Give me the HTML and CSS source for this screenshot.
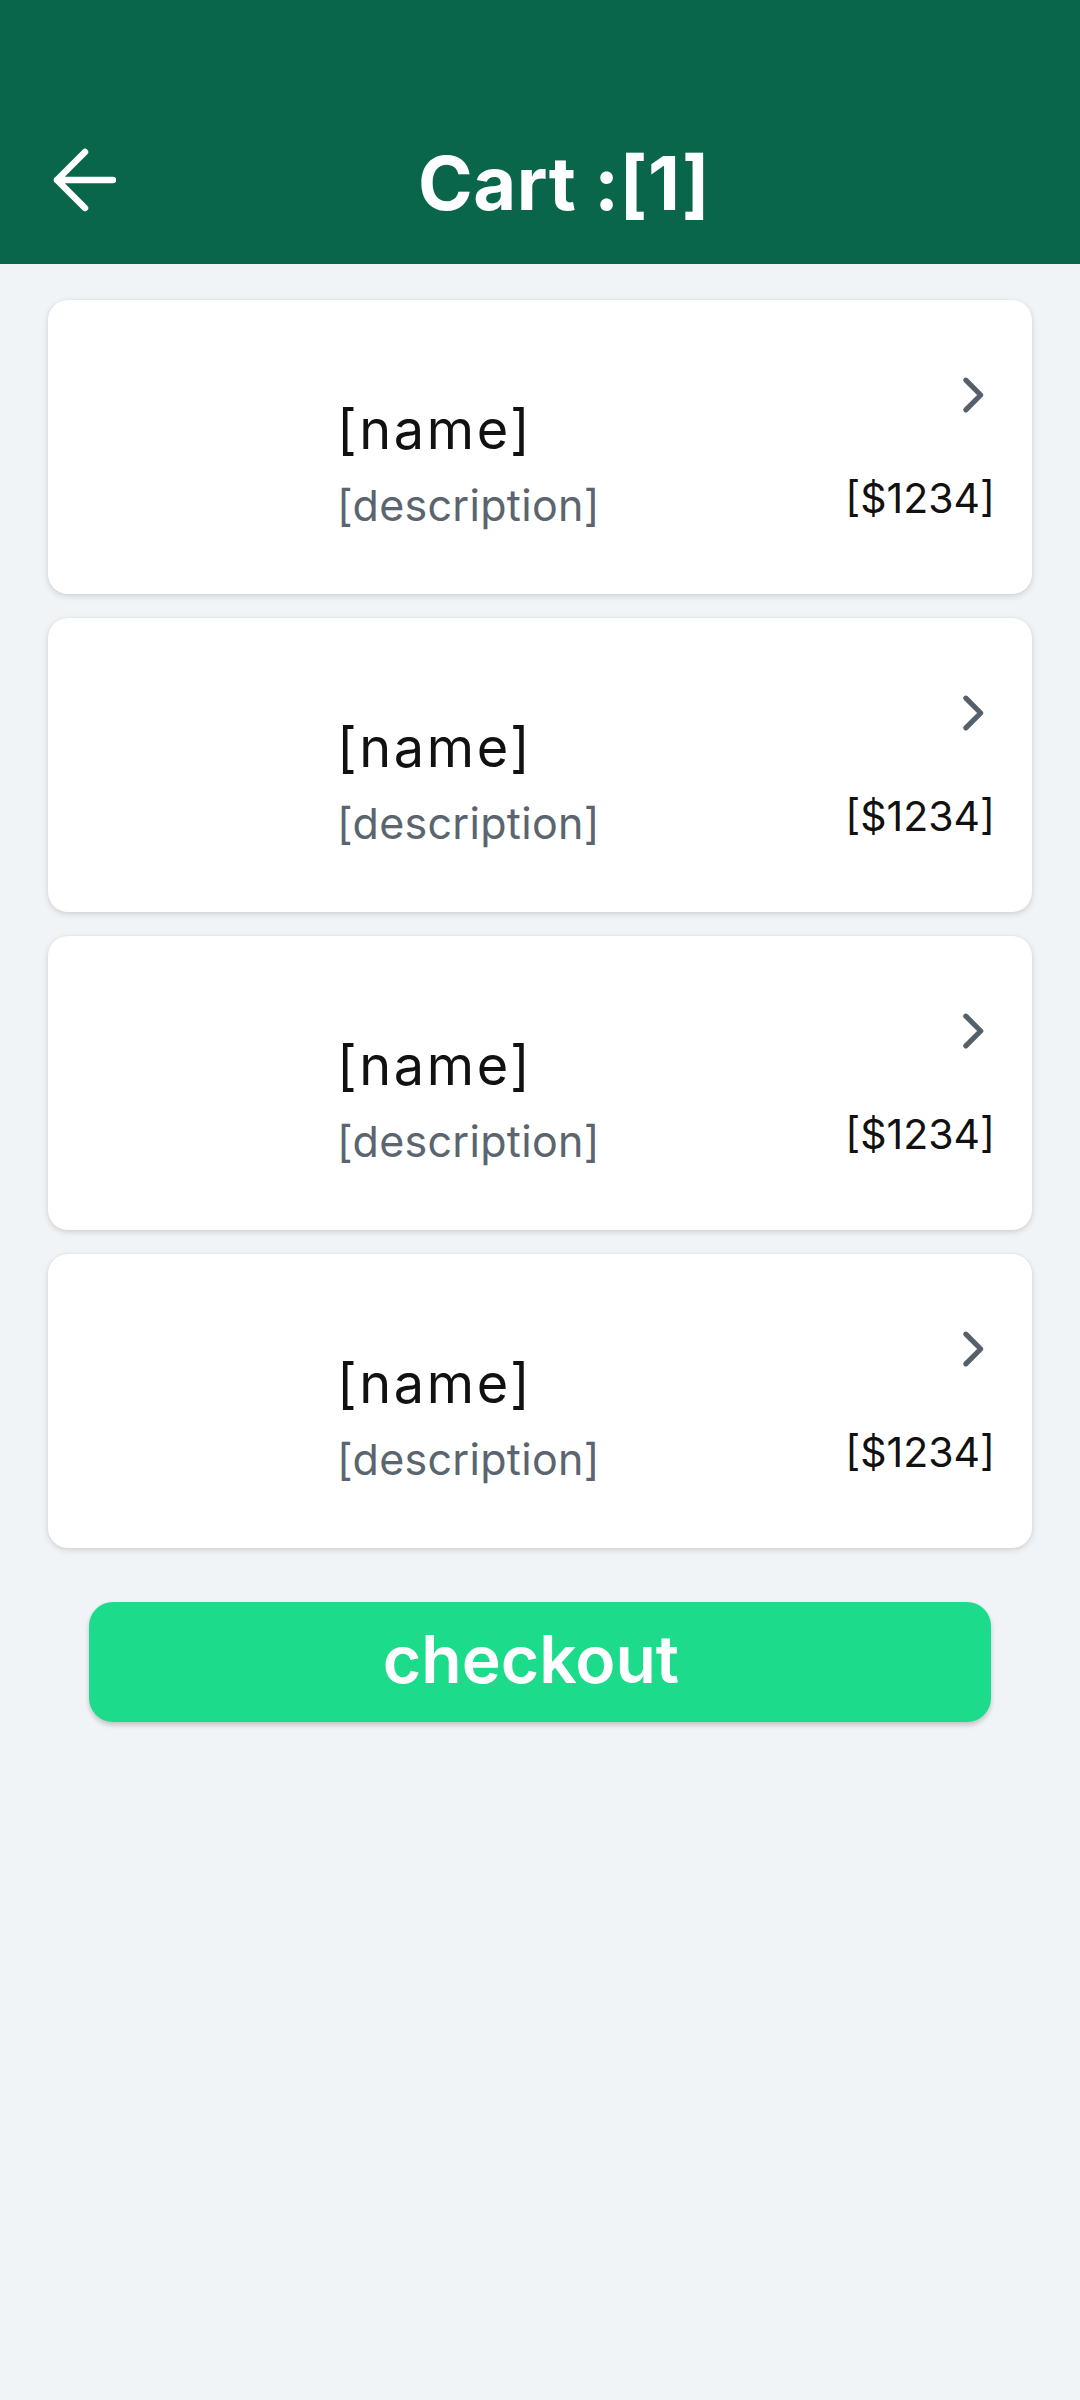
FILE: index.html
```html
<!DOCTYPE html>
<html lang="en">
<head>
<meta charset="utf-8">
<title>Cart</title>
<link rel="stylesheet" href="styles.css">
</head>
<body>
<header class="appbar">
  <div class="toolbar">
    <div class="back">
      <svg width="64" height="64" viewBox="0 0 64 64" fill="none" stroke="#fff" stroke-width="6.5" stroke-linecap="round" stroke-linejoin="round">
        <path d="M5 32H61M5 32L33 4M5 32L33 60"/>
      </svg>
    </div>
    <h1 class="title">Cart :[1]</h1>
    <div class="spacer"></div>
  </div>
</header>
<main class="list">
  <div class="card">
    <div class="thumb"></div>
    <div class="info">
      <div class="name">[name]</div>
      <div class="desc">[description]</div>
    </div>
    <div class="side">
      <svg class="chev" width="66" height="66" viewBox="0 0 24 24" fill="none" stroke="#56606a" stroke-width="1.9" stroke-linecap="round" stroke-linejoin="round"><path d="M9.4 6.6L14.8 12L9.4 17.4"/></svg>
      <div class="price">[$1234]</div>
    </div>
  </div>
  <div class="card">
    <div class="thumb"></div>
    <div class="info">
      <div class="name">[name]</div>
      <div class="desc">[description]</div>
    </div>
    <div class="side">
      <svg class="chev" width="66" height="66" viewBox="0 0 24 24" fill="none" stroke="#56606a" stroke-width="1.9" stroke-linecap="round" stroke-linejoin="round"><path d="M9.4 6.6L14.8 12L9.4 17.4"/></svg>
      <div class="price">[$1234]</div>
    </div>
  </div>
  <div class="card">
    <div class="thumb"></div>
    <div class="info">
      <div class="name">[name]</div>
      <div class="desc">[description]</div>
    </div>
    <div class="side">
      <svg class="chev" width="66" height="66" viewBox="0 0 24 24" fill="none" stroke="#56606a" stroke-width="1.9" stroke-linecap="round" stroke-linejoin="round"><path d="M9.4 6.6L14.8 12L9.4 17.4"/></svg>
      <div class="price">[$1234]</div>
    </div>
  </div>
  <div class="card">
    <div class="thumb"></div>
    <div class="info">
      <div class="name">[name]</div>
      <div class="desc">[description]</div>
    </div>
    <div class="side">
      <svg class="chev" width="66" height="66" viewBox="0 0 24 24" fill="none" stroke="#56606a" stroke-width="1.9" stroke-linecap="round" stroke-linejoin="round"><path d="M9.4 6.6L14.8 12L9.4 17.4"/></svg>
      <div class="price">[$1234]</div>
    </div>
  </div>
  <button class="checkout">checkout</button>
</main>
</body>
</html>
```
FILE: styles.css
```css
* { box-sizing: border-box; }
html, body {
  margin: 0;
  padding: 0;
}
body {
  width: 1080px;
  min-height: 2400px;
  background: #f0f4f7;
  font-family: Inter, "Noto Sans", sans-serif;
}
.appbar {
  background: #09664b;
  height: 264px;
  padding-top: 96px;
}
.toolbar {
  height: 168px;
  display: flex;
  align-items: center;
}
.back {
  width: 144px;
  padding-left: 52px;
  display: flex;
  align-items: center;
}
.back svg { display: block; }
.title {
  flex: 1;
  margin: 0;
  text-align: center;
  color: #fff;
  font-size: 74px;
  font-weight: 700;
  line-height: 1;
  letter-spacing: 0.5px;
  padding-top: 6px;
}
.spacer { width: 96px; }
.list {
  padding: 36px 48px 0;
  display: flex;
  flex-direction: column;
  gap: 24px;
}
.card {
  height: 294px;
  background: #fff;
  border-radius: 20px;
  box-shadow: 0 2px 6px rgba(0, 0, 0, 0.14), 0 0 2px rgba(0, 0, 0, 0.06);
  display: flex;
  align-items: flex-start;
  padding: 62px 26px 0 48px;
}
.thumb {
  width: 193px;
  height: 170px;
  margin-right: 48px;
}
.info {
  flex: 1;
  padding-top: 36px;
}
.name {
  font-size: 54px;
  line-height: 64px;
  color: #111;
  letter-spacing: 2.6px;
}
.desc {
  margin-top: 16px;
  font-size: 43px;
  line-height: 54px;
  color: #5a6570;
  letter-spacing: 0.3px;
}
.side {
  display: flex;
  flex-direction: column;
  align-items: flex-end;
}
.chev { display: block; }
.price {
  margin-top: 45px;
  margin-right: 11px;
  font-size: 41px;
  line-height: 50px;
  color: #111;
}
.checkout {
  margin: 30px 41px 0;
  height: 120px;
  border: none;
  border-radius: 24px;
  background: #1cdc8c;
  box-shadow: 0 3px 5px rgba(0, 0, 0, 0.2);
  color: #fff;
  font-family: Inter, "Noto Sans", sans-serif;
  font-size: 66px;
  font-weight: 600;
  padding: 0 18px 6px 0;
}
```
